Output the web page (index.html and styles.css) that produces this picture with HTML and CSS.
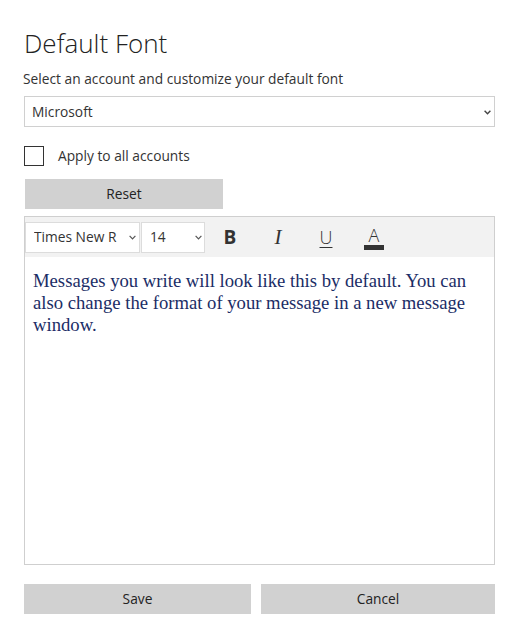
FILE: index.html
```html
<!DOCTYPE html>
<html>
<head>
<meta charset="utf-8">
<link rel="stylesheet" href="styles.css">
</head>
<body>
<div class="page">
  <h1 class="title">Default Font</h1>
  <p class="subtitle">Select an account and customize your default font</p>
  <div class="select-wrap account-wrap">
    <select class="account">
      <option>Microsoft</option>
    </select>
    <svg class="chev" width="7" height="5" viewBox="0 0 7 5"><path d="M0.6 0.8 L3.5 3.8 L6.4 0.8" fill="none" stroke="#444" stroke-width="1.4"/></svg>
  </div>
  <label class="check-row">
    <span class="checkbox"></span>
    <span class="check-label">Apply to all accounts</span>
  </label>
  <button class="btn reset">Reset</button>
  <div class="editor">
    <div class="toolbar">
      <div class="select-wrap font-name">
        <select class="tb-select"><option>Times New R</option></select>
        <svg class="chev" width="7" height="5" viewBox="0 0 7 5"><path d="M0.6 0.8 L3.5 3.8 L6.4 0.8" fill="none" stroke="#555" stroke-width="1.2"/></svg>
      </div>
      <div class="select-wrap font-size">
        <select class="tb-select"><option>14</option></select>
        <svg class="chev" width="7" height="5" viewBox="0 0 7 5"><path d="M0.6 0.8 L3.5 3.8 L6.4 0.8" fill="none" stroke="#555" stroke-width="1.2"/></svg>
      </div>
      <span class="tb-btn bold">B</span>
      <span class="tb-btn italic">I</span>
      <span class="tb-btn underline">U</span>
      <span class="tb-btn color"><span class="color-a">A</span><span class="color-bar"></span></span>
    </div>
    <div class="preview">Messages you write will look like this by default. You can also change the format of your message in a new message window.</div>
  </div>
  <div class="actions">
    <button class="btn">Save</button>
    <button class="btn">Cancel</button>
  </div>
</div>
</body>
</html>
```
FILE: styles.css
```css
* { box-sizing: border-box; }
html, body { margin: 0; background: #fff; }
body { font-family: "Open Sans", "Noto Sans", sans-serif; color: #333; }
.page { padding: 27px 23px 0 24px; width: 518px; }
.title {
  margin: 0; font-size: 26px; line-height: 32px; font-weight: 300; color: #222;
  margin-left: 0;
}
.subtitle { margin: 10px 0 0; font-size: 13.75px; line-height: 20px; color: #333; margin-left: -1px; }
.select-wrap { position: relative; }
.select-wrap select { -webkit-appearance: none; appearance: none; }
.chev { position: absolute; top: 50%; margin-top: -2px; right: 4px; }
.account-wrap { margin-top: 7px; width: 471px; height: 31px; }
.account-wrap .chev { right: 4px; }
.account {
  display: block; width: 100%; height: 31px;
  border: 1px solid #d0d0d0; border-radius: 0; background: #fff;
  font-family: inherit; font-size: 13.75px; color: #333; padding: 0 7px; outline: none;
}
.check-row { display: flex; align-items: center; margin-top: 19px; height: 20px; }
.checkbox { width: 20px; height: 20px; border: 1px solid #333; background: #fff; }
.check-label { margin-left: 14px; font-size: 13.75px; color: #333; margin-top: -1px; }
.btn {
  display: block; height: 30px; border: 0; border-radius: 0; background: #d1d1d1;
  font-family: inherit; font-size: 13.75px; color: #222; padding: 0 0 2px;
}
.reset { margin: 13px 0 0 1px; width: 198px; }
.editor {
  margin-top: 7px; width: 471px; height: 349px; border: 1px solid #cfcfcf; background: #fff;
  display: flex; flex-direction: column;
}
.toolbar {
  height: 40px; background: #f2f2f2; display: flex; align-items: center;
}
.tb-select {
  display: block; width: 100%; height: 31px; border: 1px solid #dcdcdc; border-radius: 0; background: #fff;
  font-family: inherit; font-size: 13.75px; color: #333; padding: 0 8px 1px; outline: none;
}
.font-name { width: 115px; }
.font-name .chev { right: 4px; }
.font-size { width: 64px; margin-left: 1px; }
.font-size .chev { right: 3px; }
.tb-btn {
  width: 48px; height: 40px; display: flex; align-items: center; justify-content: center;
  color: #333;
}
.bold { font-family: "Open Sans", sans-serif; font-weight: 700; font-size: 19px; margin-left: 1px; }
.italic { font-family: "Liberation Serif", serif; font-style: italic; font-size: 21px; }
.underline { font-size: 18px; font-weight: 300; text-decoration: underline; text-underline-offset: 3px; text-decoration-thickness: 1px; }
.color { flex-direction: column; }
.color-a { font-size: 18px; font-weight: 300; line-height: 18px; margin-top: 2px; }
.color-bar { width: 20px; height: 5px; background: #333; margin-top: 1px; }
.preview {
  padding: 13px 8px 0 8px; font-family: "Liberation Serif", "Times New Roman", serif;
  font-size: 18.67px; line-height: 22px; color: #1b2d66;
}
.actions { display: grid; grid-template-columns: 227px 234px; column-gap: 10px; margin-top: 19px; }
```
